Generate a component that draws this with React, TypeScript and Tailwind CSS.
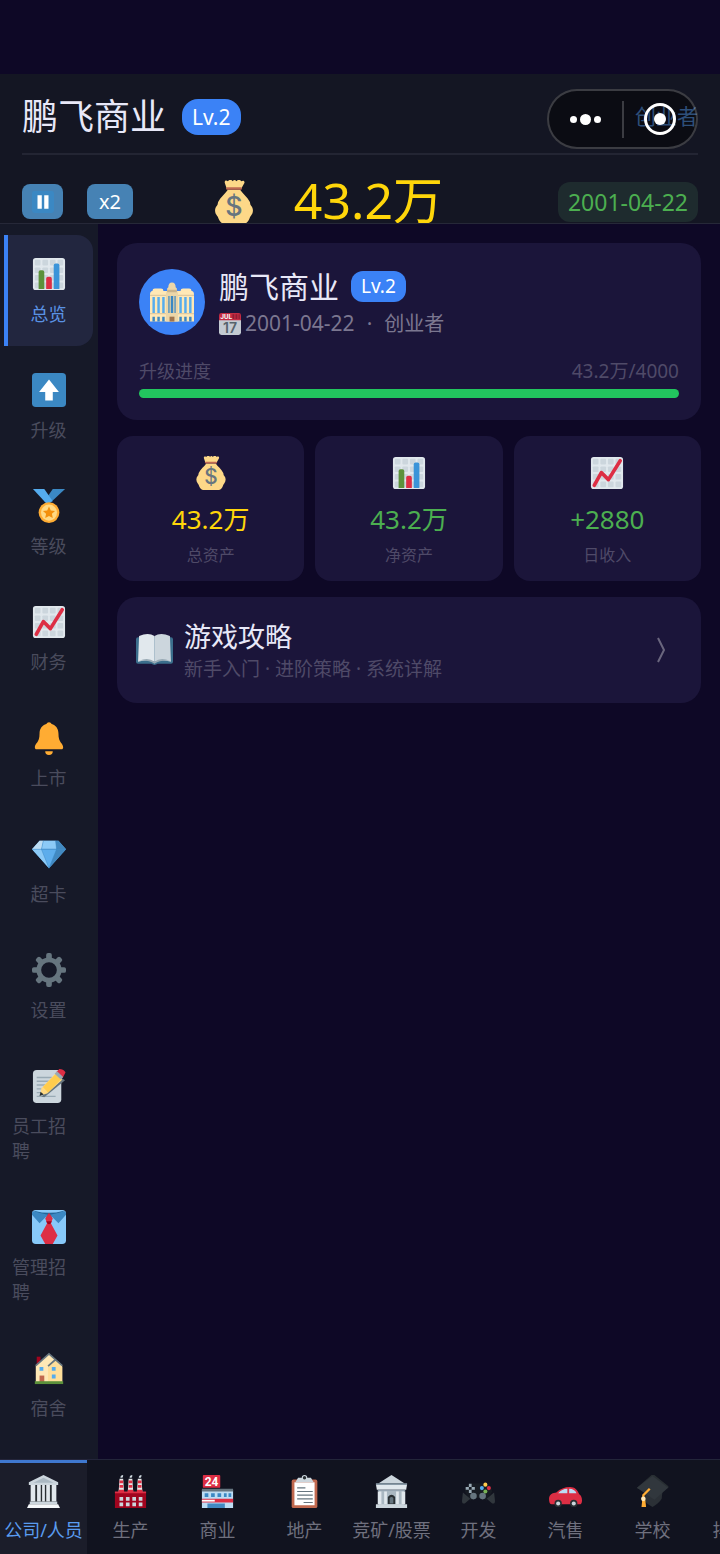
import type { ReactNode } from "react";

type IconName =
  | "bag"
  | "bars"
  | "trend"
  | "up"
  | "medal"
  | "bell"
  | "gem"
  | "gear"
  | "memo"
  | "tie"
  | "house"
  | "classical"
  | "factory"
  | "store"
  | "clipboard"
  | "bank"
  | "gamepad"
  | "car"
  | "cap"
  | "book"
  | "calendar"
  | "palace"
  | "pause"
  | "trophy";

// White sheet with a faint grid, shared by both chart icons.
const gridSheet = (
  <>
    <rect x="1" y="1" width="34" height="34" rx="3" fill="#e1e8ed" />
    <g fill="#ccd6dd">
      {[3, 11, 19, 27].map((y) =>
        [3, 11, 19, 27].map((x) => <rect key={`${x}-${y}`} x={x} y={y} width="6" height="6" rx="1" />)
      )}
    </g>
  </>
);

const icons: Record<IconName, ReactNode> = {
  bag: (
    <>
      <path
        d="M13 8h10c2 3 6 6 8 10 .5 1.500 0 2 1 3 2 2 2 6 0 8-1 1-1 2-2 4-1 2-3 3-5 3H11c-2 0-4-1-5-3-1-2-1-3-2-4-2-2-2-6 0-8 1-1 .5-1.500 1-3 2-4 6-7 8-10z"
        fill="#fdd888"
      />
      <path d="M12 7 10.500 2.500C10 .5 11.500 0 13 1c1-1.500 3-1.500 4 0 .7-1.200 2-1.200 3 0 1-1.500 3-1.500 4 0 1.500-1 3-.3 2.500 1.500L24 7z" fill="#fdd888" />
      <rect x="11.500" y="6" width="13" height="2" rx="1" fill="#bf6952" />
      <text x="18" y="29.500" textAnchor="middle" fontSize="22" fontWeight="500" fill="#67757f" fontFamily="Inter, sans-serif">
        $
      </text>
    </>
  ),
  bars: (
    <>
      {gridSheet}
      <path d="M7 34V16a2 2 0 0 1 2-2h2a2 2 0 0 1 2 2v18z" fill="#5c913b" />
      <path d="M15 34V23a2 2 0 0 1 2-2h2a2 2 0 0 1 2 2v11z" fill="#dd2e44" />
      <path d="M23 34V9a2 2 0 0 1 2-2h2a2 2 0 0 1 2 2v25z" fill="#3b94d9" />
    </>
  ),
  trend: (
    <>
      {gridSheet}
      <path d="m4.500 31 7.500-13.500 7.500 7.500L32 5" fill="none" stroke="#dd2e44" strokeWidth="3.800" strokeLinecap="round" strokeLinejoin="round" />
    </>
  ),
  up: (
    <>
      <rect width="36" height="36" rx="4" fill="#3b88c3" />
      <path d="M28.500 20 18 7 7.500 20H14v9h8v-9z" fill="#fff" />
    </>
  ),
  medal: (
    <>
      <path d="m22 0-9 13 5 3L35 0z" fill="#3b88c3" />
      <path d="M13 0H1l14 15 7-2z" fill="#55acee" />
      <circle cx="18" cy="25" r="11" fill="#ffac33" />
      <circle cx="18" cy="25" r="8.500" fill="#ffd983" />
      <path d="m18 18.500 1.900 4.200 4.500.5-3.300 3.100.9 4.500-4-2.300-4 2.300.9-4.500-3.300-3.100 4.500-.5z" fill="#f4900c" />
    </>
  ),
  bell: (
    <path
      d="M28 13c0 11 5 10 5 15 0 2-2 2-2 2H5s-2 0-2-2c0-5 5-4 5-15 0-4.700 2.900-8.700 7.200-9.800a3 3 0 0 1 5.600 0C25.100 4.300 28 8.300 28 13zM14 32h8a4 4 0 0 1-8 0z"
      fill="#ffac33"
    />
  ),
  gem: (
    <>
      <path d="M8 4h20l8 9-18 20L0 13z" fill="#5dadec" />
      <path d="M8 4h4l-2 9H0z" fill="#bdddf4" />
      <path d="M12 4h13l1 9H10z" fill="#8ccaf7" />
      <path d="M25 4h3l8 9H26z" fill="#4289c1" />
      <path d="M0 13h10l8 20z" fill="#8ccaf7" />
      <path d="M36 13H26l-8 20z" fill="#4289c1" />
      <path d="m12 4-2 9h16l-1-9M10 13l8 20 8-20M0 13h36" fill="none" stroke="#3a87c2" strokeWidth=".5" />
    </>
  ),
  gear: (
    <>
      <circle cx="18" cy="18" r="10.800" fill="none" stroke="#66757f" strokeWidth="5" />
      <g fill="#66757f">
        {[0, 45, 90, 135, 180, 225, 270, 315].map((a) => (
          <path key={a} d="M15 7V2a2 2 0 0 1 2-2h2a2 2 0 0 1 2 2v5z" transform={`rotate(${a} 18 18)`} />
        ))}
      </g>
    </>
  ),
  memo: (
    <>
      <rect x="1" y="1" width="30" height="35" rx="4" fill="#ccd6dd" />
      <path d="M5 9h16M5 13h14M5 17h11M5 21h8M5 25h10M5 29h20" stroke="#99aab5" strokeWidth="1.500" />
      <path d="m10 29 22-19 3 2-22 18z" fill="#66757f" />
      <path d="M8.500 28 10 20.500 25 4.500l7 7L16 26z" fill="#ffd983" />
      <path d="M11.500 19 27 3.500l5.500 5.500L17 25z" fill="#ffcc4d" />
      <path d="m26 3 3-3q4 0 6.500 3.500l-3 6z" fill="#dd2e44" />
      <path d="m24 5 2.500-2.500 6.500 6-2.500 2.500z" fill="#99aab5" />
      <path d="m8 28.500 1-4.500 3.500 3z" fill="#292f33" />
    </>
  ),
  tie: (
    <>
      <rect width="36" height="36" rx="4" fill="#88c9f9" />
      <path d="M3 1q15 4 30 0v6H3z" fill="#226699" />
      <path d="M2 1q8 3 15 4L8 14 0 5V3q0-1 2-2zm32 0q-8 3-15 4l9 9 8-9V3q0-1-2-2z" fill="#3b88c3" />
      <path d="m18 3 4 6-2 5 7 13-5 9h-8l-5-9 7-13-2-5z" fill="#dd2e44" />
      <path d="M15 12h6l-1 2q-2 2-4 0z" fill="#a0041e" />
    </>
  ),
  house: (
    <>
      <path d="M5 6h4v9H5z" fill="#a0041e" />
      <path d="M4 15 18 3l14 12v18H4z" fill="#ffe8b6" />
      <path d="M17 17 24 9l8 8v16H17z" fill="#ffdf9a" />
      <path d="M4 15.500 18 3l14 12.500M17 16l8-7" fill="none" stroke="#66757f" strokeWidth="1.800" />
      <path d="M8 17h4v4H8zm13 0h4v4h-4zm0 8h4v4h-4z" fill="#55acee" />
      <path d="M8 26h5v7H8z" fill="#c1694f" />
      <path d="M3 32h30v3H3z" fill="#5c913b" />
    </>
  ),
  classical: (
    <>
      <path d="M2 8 18 0l16 8v3H2z" fill="#ccd6dd" />
      <path d="M7 8.500 18 3l11 5.500z" fill="#aab8c2" />
      <path d="M4 11h28v19H4z" fill="#292f33" />
      <path d="M4 11h5v18H4zm7 0h4v18h-4zm10 0h4v18h-4zm6 0h5v18h-5zm-10.500 0h3v18h-3z" fill="#e1e8ed" />
      <path d="M3 29h30v3H3z" fill="#ccd6dd" />
      <path d="M2 32h32l2 4H0z" fill="#f5f8fa" />
    </>
  ),
  factory: (
    <>
      <path d="M6 4h4l1 15H5zm10 0h4l1 15h-6zm10 0h4l1 15h-6z" fill="#e6e7e8" />
      <path d="M6 6h4v3H6zm0 5h4v3H6zm-1 5h6v3H5zM16 6h4v3h-4zm0 5h4v3h-4zm-1 5h6v3h-6zM26 6h4v3h-4zm0 5h4v3h-4zm-1 5h6v3h-6z" fill="#dd2e44" />
      <path d="M7 3q0-3 3-3 0 3-1 3zm10 0q0-3 3-3 0 3-1 3zm10 0q0-3 3-3 0 3-1 3z" fill="#ccd6dd" />
      <path d="M1 19h34v17H1z" fill="#a0041e" />
      <path d="M1 18h34v2H1z" fill="#dd2e44" />
      <path d="M6 24h4v4H6zm7 0h4v4h-4zm7 0h4v4h-4zm7 0h4v4h-4zM6 30h4v4H6zm7 0h4v4h-4zm7 0h4v4h-4zm7 0h4v4h-4z" fill="#ccd6dd" />
    </>
  ),
  store: (
    <>
      <path d="M1 16h34v20H1z" fill="#bdddf4" />
      <path d="M1 15h34v3H1z" fill="#66757f" />
      <path d="M4 20h4v4H4zm7 0h4v4h-4zm7 0h4v4h-4zm7 0h3v4h-3zm5 0h3v4h-3z" fill="#3b88c3" />
      <path d="M1 26h34v4H1z" fill="#dd2e44" />
      <path d="M1 27h14v2H1z" fill="#fff" />
      <path d="M7 31h9v5H7zm9 0h10v5H16z" fill="#4289c1" />
      <rect x="2" y="0" width="19" height="14" rx="1" fill="#dd2e44" />
      <text x="11.500" y="11.500" textAnchor="middle" fontSize="13" fontWeight="700" fill="#fff" fontFamily="Roboto, sans-serif">
        24
      </text>
    </>
  ),
  clipboard: (
    <>
      <rect x="4" y="5" width="28" height="31" rx="2" fill="#c1694f" />
      <path d="M7 8h22v25H7z" fill="#fff" />
      <path d="M15 3a3 3 0 0 1 6 0h4l3 5H8l3-5z" fill="#ccd6dd" />
      <circle cx="18" cy="3" r="1.800" fill="#292f33" />
      <path d="M10 14h9M10 18h17M10 22h17M10 26h17M17 30h10" stroke="#66757f" strokeWidth="1.300" />
    </>
  ),
  bank: (
    <>
      <path d="M4 9 18 0l14 9z" fill="#ccd6dd" />
      <path d="M1 10h34l-1 6H2z" fill="#e1e8ed" />
      <path d="M1 9h34v2H1zm2 7h30v2H3z" fill="#8899a6" />
      <path d="M4 17h28v16H4z" fill="#aab8c2" />
      <path d="M3 18h4v14H3zm7 0h3v14h-3zm13 0h3v14h-3zm6 0h4v14h-4z" fill="#e1e8ed" />
      <path d="M14 32v-8q4-5 8 0v8z" fill="#292f33" />
      <path d="M16 31v-6q2-2 4 0v6z" fill="#66757f" />
      <path d="M1 32h34v4H1z" fill="#ccd6dd" />
    </>
  ),
  gamepad: (
    <>
      <path d="M3 18q2-9 8-9h14q6 0 8 9l-6 10-5-3h-8l-5 3z" fill="#171b23" />
      <path d="m1 19 8 7-6 5q-3 1-3-3zm34 0-8 7 6 5q3 1 3-3z" fill="#31373d" />
      <path d="M9 9.500v3.500m0 3v3.500M4 14.500h3.500m3 0H14" stroke="#99aab5" strokeWidth="3" />
      <circle cx="12.500" cy="23" r="3.600" fill="#66757f" />
      <circle cx="22.500" cy="23" r="3.600" fill="#66757f" />
      <circle cx="25.500" cy="10.500" r="2.200" fill="#ffcc4d" />
      <circle cx="25.500" cy="18" r="2.200" fill="#77b255" />
      <circle cx="21.700" cy="14.300" r="2.200" fill="#55acee" />
      <circle cx="29.300" cy="14.300" r="2.200" fill="#dd2e44" />
    </>
  ),
  car: (
    <>
      <path d="M0 26q0-4 4-6l4-1q6-6 15-6c5 0 8 3 10 8q3 2 3 7 0 4-3 4H3q-3 0-3-6z" fill="#dd2e44" />
      <path d="M10 20q4-5 10-5v5zm12-5q6 0 8 5h-8z" fill="#bdddf4" />
      <circle cx="10" cy="31" r="4" fill="#292f33" />
      <circle cx="27" cy="31" r="4" fill="#292f33" />
      <circle cx="10" cy="31" r="2.200" fill="#ccd6dd" />
      <circle cx="27" cy="31" r="2.200" fill="#ccd6dd" />
    </>
  ),
  cap: (
    <>
      <path d="M17 0q2-1 3 0l15 12q1 1 0 2L22 21 2 15q-1-1 0-2z" fill="#292f33" />
      <path d="M10 14 29 17l-1 9q-3 5-10 9-6-3-8-6z" fill="#2b3036" />
      <path d="m1 14 17-13 17 13-15 13z" fill="#31373d" />
      <path d="M15 15 8 22v13" fill="none" stroke="#ffac33" strokeWidth="2.500" />
      <path d="M7 26h3l1 9H6z" fill="#ffac33" />
      <circle cx="8" cy="26" r="2.500" fill="#ffe8b6" />
    </>
  ),
  book: (
    <>
      <path d="M0 7q0-2 2-2h32q2 0 2 2v22q0 2-2 2H21q-3 2-6 0H2q-2 0-2-2z" fill="#3b6e8c" />
      <path d="M3 4q9-4 15 0v25q-7-3-16 0z" fill="#e1e8ed" />
      <path d="M33 4q-9-4-15 0v25q7-3 16 0z" fill="#ccd6dd" />
      <path d="M3 28q9-4 15 1 6-5 15-1-9-1-15 3-6-4-15-3z" fill="#99aab5" />
    </>
  ),
  calendar: (
    <>
      <rect y="4" width="36" height="32" rx="4" fill="#c3cad2" />
      <path d="M0 12V4q0-4 4-4h28q4 0 4 4v8z" fill="#c42b42" />
      <path d="M22 2h3v8h-3zm5 0h3v8h-3zm5 0h2v8h-2z" fill="#8f1d33" />
      <text x="2" y="10.500" fontSize="11" fontWeight="700" fill="#f5f8fa" fontFamily="Roboto, sans-serif">
        JUL
      </text>
      <text x="18" y="32" textAnchor="middle" fontSize="23" fontWeight="600" fill="#56636d" fontFamily="Inter, sans-serif">
        17
      </text>
    </>
  ),
  palace: (
    <>
      <path d="M0 12q0-3 2-3 0-2 2-2h5q2 0 2 2h14q0-2 2-2h5q2 0 2 2 2 0 2 3v22H0z" fill="#ffe8b6" />
      <path d="M0 12h36v1H0z" fill="#e0c9a0" />
      <path d="M2 14h2v13H2zm4 0h2v13H6zm4 0h2v13h-2zm14 0h2v13h-2zm4 0h2v13h-2zm4 0h2v13h-2z" fill="#55acee" />
      <path d="M2 30h2v4H2zm4 0h2v4H6zm4 0h2v4h-2zm14 0h2v4h-2zm4 0h2v4h-2zm4 0h2v4h-2z" fill="#3b88c3" />
      <path d="M0 27h36v1H0z" fill="#e0c9a0" />
      <path d="M14 9V7l1-1q0-4 3-4t3 4l1 1v2q1 1 1 3v22H13V12q0-2 1-3z" fill="#ecd6a8" />
      <path d="M15 13h1v14h-1zm2 0h2v14h-2zm3 0h1v14h-1z" fill="#3b88c3" />
      <path d="M14 8h8v2h-8z" fill="#c9b38c" />
      <path d="M16 30h4v4h-4z" fill="#a0754e" />
    </>
  ),
  pause: (
    <>
      <rect width="36" height="36" rx="4" fill="#3b88c3" />
      <path d="M9 7h7v22H9zm11 0h7v22h-7z" fill="#fff" />
    </>
  ),
  trophy: <path d="M8 2h20v10q0 9-8 11v6h6v5H10v-5h6v-6q-8-2-8-11z" fill="#ffac33" />,
};

function Icon({ name, className }: { name: IconName; className: string }) {
  return (
    <svg viewBox="0 0 36 36" aria-hidden="true" className={`shrink-0 ${className}`}>
      {icons[name]}
    </svg>
  );
}

interface Tab {
  label: string;
  icon: IconName;
}

const sideTabs: Tab[] = [
  { label: "总览", icon: "bars" },
  { label: "升级", icon: "up" },
  { label: "等级", icon: "medal" },
  { label: "财务", icon: "trend" },
  { label: "上市", icon: "bell" },
  { label: "超卡", icon: "gem" },
  { label: "设置", icon: "gear" },
  { label: "员工招聘", icon: "memo" },
  { label: "管理招聘", icon: "tie" },
  { label: "宿舍", icon: "house" },
];

const bottomTabs: Tab[] = [
  { label: "公司/人员", icon: "classical" },
  { label: "生产", icon: "factory" },
  { label: "商业", icon: "store" },
  { label: "地产", icon: "clipboard" },
  { label: "竞矿/股票", icon: "bank" },
  { label: "开发", icon: "gamepad" },
  { label: "汽售", icon: "car" },
  { label: "学校", icon: "cap" },
  { label: "排行榜", icon: "trophy" },
];

const stats = [
  { icon: "bag" as IconName, value: "43.2万", label: "总资产", color: "text-[#ffd60a]" },
  { icon: "bars" as IconName, value: "43.2万", label: "净资产", color: "text-[#4caf50]" },
  { icon: "trend" as IconName, value: "+2880", label: "日收入", color: "text-[#4caf50]" },
];

// Floating host-app capsule with the menu and close buttons.
function Capsule() {
  return (
    <div className="absolute top-[15px] right-[22px] flex h-[60px] w-[151px] items-center rounded-full border-2 border-white/20 bg-black/45">
      <button aria-label="更多" className="flex flex-1 items-center justify-center gap-[3px]">
        <span className="size-[7px] rounded-full bg-white" />
        <span className="size-[11px] rounded-full bg-white" />
        <span className="size-[7px] rounded-full bg-white" />
      </button>
      <span className="h-[37px] w-[2px] bg-white/20" />
      <button aria-label="关闭" className="flex flex-1 items-center justify-center">
        <span className="flex size-8 items-center justify-center rounded-full border-3 border-white">
          <span className="size-3 rounded-full bg-white" />
        </span>
      </button>
    </div>
  );
}

function Header() {
  return (
    <header className="relative h-[150px] shrink-0 overflow-hidden border-b border-[#262838] bg-[#141623] px-[22px]">
      <div className="flex h-[81px] items-center border-b-2 border-[#232533] pt-[6px]">
        <h1 className="text-[36px] leading-[54px] text-[#e8e8f8]">鹏飞商业</h1>
        <span className="ml-4 rounded-2xl bg-[#3b82f6] px-[10px] text-[21px] leading-9 text-white">Lv.2</span>
        <span className="ml-auto text-[21px] text-[#5590dd]">创业者</span>
      </div>
      <div className="flex h-[93px] items-center">
        <button aria-label="暂停" className="flex h-[35px] w-[41px] items-center justify-center rounded-lg bg-[#4682b4]">
          <Icon name="pause" className="size-[22px]" />
        </button>
        <button className="ml-6 h-[35px] w-[46px] rounded-lg bg-[#4682b4] text-[20px] text-white">x2</button>
        <div className="flex flex-1 items-center justify-center gap-[38px] pr-9">
          <Icon name="bag" className="size-11" />
          <span className="pb-1 text-[50px] leading-[44px] text-[#ffd60a]">43.2万</span>
        </div>
        <time className="rounded-xl bg-[#1e2b2e] px-[10px] text-[23px] leading-10 text-[#4caf50]">2001-04-22</time>
      </div>
      <Capsule />
    </header>
  );
}

function Sidebar() {
  return (
    <nav className="flex w-[98px] shrink-0 flex-col gap-[5px] overflow-hidden bg-[#161928] px-1 pt-[11px]">
      {sideTabs.map((tab, i) => (
        <button
          key={tab.label}
          className={`flex w-[89px] shrink-0 flex-col items-center gap-[11px] rounded-r-2xl border-l-4 pt-[22px] pr-2 pl-1 pb-[19px] text-[18px] leading-[25px] ${
            i === 0 ? "border-[#3b82f6] bg-[#22263f] text-[#5a92e4]" : "border-transparent text-[#4a4c5d]"
          }`}
        >
          <Icon name={tab.icon} className="size-[34px]" />
          <span className={tab.label.length > 3 ? "w-full pr-4 text-left" : ""}>{tab.label}</span>
        </button>
      ))}
    </nav>
  );
}

function ProfileCard() {
  return (
    <section className="rounded-[20px] bg-[#1b153a] p-[22px] pt-[21px]">
      <div className="flex items-center gap-[14px]">
        <div className="flex size-[66px] items-center justify-center rounded-full bg-[#3b82f6]">
          <Icon name="palace" className="size-11" />
        </div>
        <div>
          <div className="flex h-11 items-center gap-3">
            <h2 className="text-[30px] text-[#e8e8f8]">鹏飞商业</h2>
            <span className="rounded-xl bg-[#3b82f6] px-[10px] text-[19px] leading-[31px] text-white">Lv.2</span>
          </div>
          <div className="flex h-8 items-center text-[21px] text-[#7b7790]">
            <Icon name="calendar" className="mr-1 size-[22px]" />
            <time>2001-04-22</time>
            <span className="mx-3">·</span>
            <span className="text-[20px]">创业者</span>
          </div>
        </div>
      </div>
      <div className="mt-[18px] flex justify-between text-[18px] leading-[26px] text-[#4f4a68]">
        <span>升级进度</span>
        <span className="text-[19px]">43.2万/4000</span>
      </div>
      <div className="mt-[5px] h-[9px] rounded-full bg-[#22c55e]" role="progressbar" aria-label="升级进度" aria-valuenow={100} />
    </section>
  );
}

export default function App() {
  return (
    <div className="flex h-screen flex-col bg-[#0e0826] pt-[74px] font-['Noto_Sans','Noto_Sans_CJK_SC',sans-serif]">
      <Header />
      <div className="flex min-h-0 flex-1">
        <Sidebar />
        <main className="flex min-w-0 flex-1 flex-col gap-4 p-[19px]">
          <ProfileCard />
          <section className="grid grid-cols-3 gap-[11px]">
            {stats.map((s) => (
              <div key={s.label} className="flex flex-col items-center rounded-2xl bg-[#1b153a] pt-5 pb-[14px]">
                <Icon name={s.icon} className="size-[34px]" />
                <span className={`mt-[12px] text-[26px] leading-[34px] ${s.color}`}>{s.value}</span>
                <span className="mt-[7px] text-[16px] leading-6 text-[#4f4a68]">{s.label}</span>
              </div>
            ))}
          </section>
          <button className="flex items-center rounded-[20px] bg-[#1b153a] py-5 pr-[34px] pl-[19px] text-left">
            <Icon name="book" className="size-[37px]" />
            <span className="ml-[11px] flex flex-1 flex-col pt-[2px]">
              <span className="text-[27px] leading-9 text-[#e8e8f8]">游戏攻略</span>
              <span className="text-[19px] leading-7 text-[#4f4a68]">新手入门 · 进阶策略 · 系统详解</span>
            </span>
            <svg viewBox="0 0 12 26" aria-hidden="true" className="h-[26px] w-3 fill-none stroke-[#6a667e] stroke-2">
              <path d="m3 1 6 12-6 12" />
            </svg>
          </button>
        </main>
      </div>
      <nav className="flex h-[95px] shrink-0 overflow-hidden border-t border-[#23253a] bg-[#11131f]">
        {bottomTabs.map((tab, i) => (
          <button
            key={tab.label}
            className={`flex w-[87px] shrink-0 flex-col items-center gap-[10px] border-t-3 pt-[12px] text-[18px] leading-[25px] whitespace-nowrap ${
              i === 0 ? "border-[#3f78cf] bg-[#1b1d2a] text-[#5a9cf0]" : "border-transparent text-[#6f707e]"
            }`}
          >
            <Icon name={tab.icon} className="size-[33px]" />
            <span>{tab.label}</span>
          </button>
        ))}
      </nav>
    </div>
  );
}
